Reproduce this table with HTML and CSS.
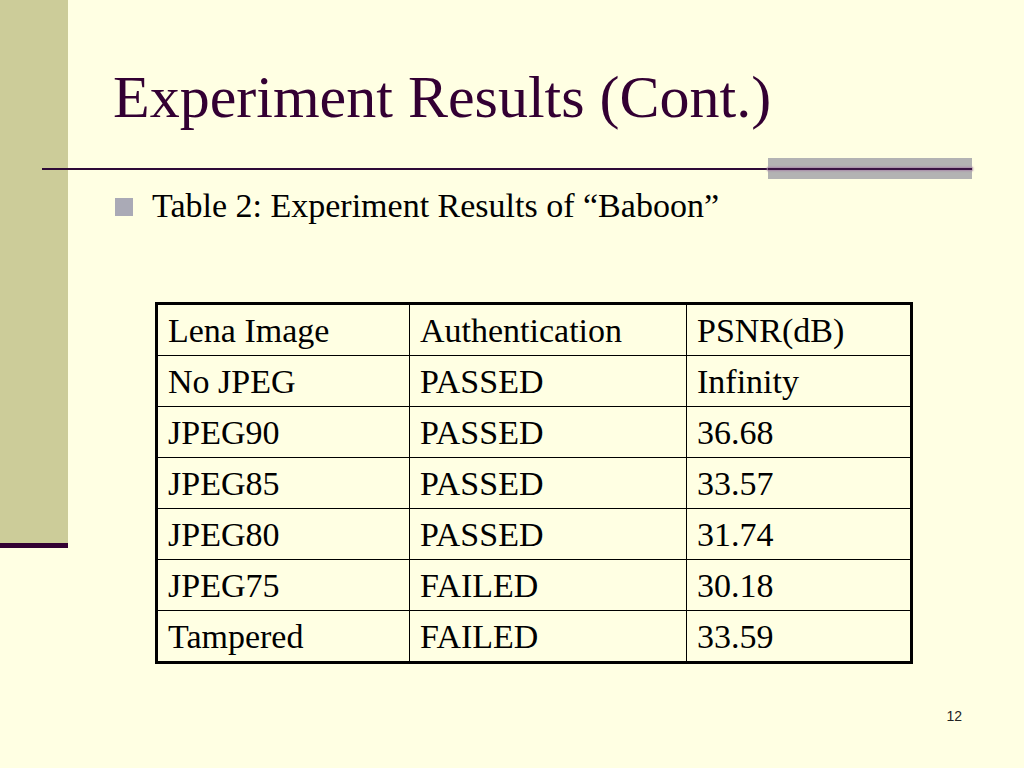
FILE: index.html
```html
<!DOCTYPE html>
<html>
<head>
<meta charset="utf-8">
<link rel="stylesheet" href="styles.css">
</head>
<body>
<div class="slide">
  <div class="sidebar"></div>
  <div class="main">
    <h1 class="title">Experiment Results (Cont.)</h1>
    <div class="rule">
      <div class="rule-line"></div>
      <div class="rule-block"><div class="rule-line"></div></div>
    </div>
    <div class="bullet-row">
      <span class="bullet"></span>
      <span class="bullet-text">Table 2: Experiment Results of “Baboon”</span>
    </div>
    <table class="results">
      <colgroup><col class="c1"><col class="c2"><col class="c3"></colgroup>
      <tr><td>Lena Image</td><td>Authentication</td><td>PSNR(dB)</td></tr>
      <tr><td>No JPEG</td><td>PASSED</td><td>Infinity</td></tr>
      <tr><td>JPEG90</td><td>PASSED</td><td>36.68</td></tr>
      <tr><td>JPEG85</td><td>PASSED</td><td>33.57</td></tr>
      <tr><td>JPEG80</td><td>PASSED</td><td>31.74</td></tr>
      <tr><td>JPEG75</td><td>FAILED</td><td>30.18</td></tr>
      <tr><td>Tampered</td><td>FAILED</td><td>33.59</td></tr>
    </table>
    <div class="page-num">12</div>
  </div>
</div>
</body>
</html>
```
FILE: styles.css
```css
html, body {
  margin: 0;
  padding: 0;
}
body {
  background: #FFFFE3;
  font-family: "Liberation Serif", "Times New Roman", serif;
  color: #000;
}
.slide {
  width: 1024px;
  height: 768px;
  display: flex;
  flex-direction: row;
  overflow: hidden;
}
.sidebar {
  flex: 0 0 68px;
  height: 543px;
  background: #CCCC99;
  border-bottom: 5px solid #330033;
}
.main {
  flex: 1;
  display: flex;
  flex-direction: column;
  align-items: flex-start;
}
.title {
  margin: 63px 0 0 45px;
  font-weight: normal;
  font-size: 60px;
  line-height: 69px;
  color: #330033;
  white-space: nowrap;
}
.rule {
  margin-top: 26px;
  margin-left: -26px;
  width: 930px;
  height: 21px;
  display: flex;
  align-items: center;
}
.rule > .rule-line {
  flex: 1;
}
.rule-line {
  height: 2px;
  background: #2E0A38;
}
.rule-block {
  flex: 0 0 204px;
  height: 21px;
  background: #B3B3B3;
  display: flex;
  flex-direction: column;
  justify-content: center;
}
.rule-block .rule-line {
  width: 100%;
  background: #3A1444;
  box-shadow: 0 0 2px 1px #A889A8;
}
.bullet-row {
  margin-top: 7px;
  margin-left: 47px;
  display: flex;
  align-items: center;
  height: 39px;
}
.bullet {
  width: 18px;
  height: 18px;
  background: #AAAAB6;
  margin-right: 19px;
  margin-top: 2px;
}
.bullet-text {
  font-size: 34px;
  line-height: 39px;
  white-space: nowrap;
}
.results {
  margin-top: 77px;
  margin-left: 87px;
  border: 3px solid #000;
  border-spacing: 0;
  table-layout: fixed;
  width: 758px;
  font-size: 34px;
}
.results col.c1 { width: 252px; }
.results col.c2 { width: 277px; }
.results col.c3 { width: 223px; }
.results td {
  height: 50px;
  padding: 0 0 0 10px;
  border-right: 1px solid #000;
  border-bottom: 1px solid #000;
  white-space: nowrap;
  vertical-align: middle;
  line-height: 39px;
}
.results td:last-child {
  border-right: none;
}
.results tr:last-child td {
  border-bottom: none;
}
.page-num {
  align-self: stretch;
  text-align: right;
  padding-right: 62px;
  margin-top: 44px;
  font-family: "Liberation Sans", Arial, sans-serif;
  font-size: 14px;
  color: #222;
}
```
